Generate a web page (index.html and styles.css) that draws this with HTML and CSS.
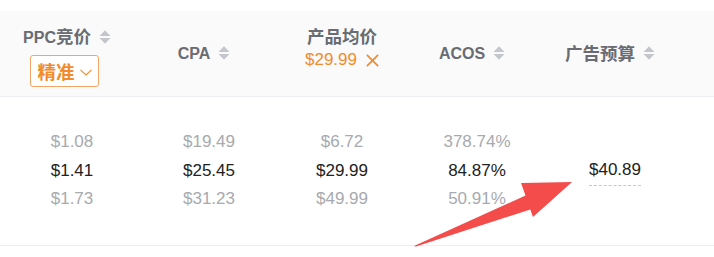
FILE: index.html
```html
<!DOCTYPE html>
<html lang="zh-CN">
<head>
<meta charset="utf-8">
<title>广告数据</title>
<link rel="stylesheet" href="styles.css">
</head>
<body>
<div class="table">
  <div class="row head">
    <div class="cell sortable stacked">
      <div class="title"><span>PPC<span class="cjk">竞价</span></span><svg class="sort" viewBox="0 0 12 14" width="12" height="14"><path d="M0.5 6 L6 0.3 L11.5 6 Z M0.5 8 L6 13.7 L11.5 8 Z"/></svg></div>
      <button class="pick">精准<svg class="chev" viewBox="0 0 12 7" width="12" height="7"><path d="M0.5 0.8 L6 6 L11.5 0.8"/></svg></button>
    </div>
    <div class="cell sortable">
      <div class="title">CPA<svg class="sort" viewBox="0 0 12 14" width="12" height="14"><path d="M0.5 6 L6 0.3 L11.5 6 Z M0.5 8 L6 13.7 L11.5 8 Z"/></svg></div>
    </div>
    <div class="cell stacked">
      <div class="title cjk">产品均价</div>
      <div class="filter">$29.99<svg class="close" viewBox="0 0 12 12" width="13" height="13"><path d="M0.8 0.8 L11.2 11.2 M11.2 0.8 L0.8 11.2"/></svg></div>
    </div>
    <div class="cell sortable">
      <div class="title">ACOS<svg class="sort" viewBox="0 0 12 14" width="12" height="14"><path d="M0.5 6 L6 0.3 L11.5 6 Z M0.5 8 L6 13.7 L11.5 8 Z"/></svg></div>
    </div>
    <div class="cell sortable">
      <div class="title"><span class="cjk">广告预算</span><svg class="sort" viewBox="0 0 12 14" width="12" height="14"><path d="M0.5 6 L6 0.3 L11.5 6 Z M0.5 8 L6 13.7 L11.5 8 Z"/></svg></div>
    </div>
  </div>
  <div class="row body">
    <div class="cell values"><span class="muted">$1.08</span><span>$1.41</span><span class="muted">$1.73</span></div>
    <div class="cell values"><span class="muted">$19.49</span><span>$25.45</span><span class="muted">$31.23</span></div>
    <div class="cell values"><span class="muted">$6.72</span><span>$29.99</span><span class="muted">$49.99</span></div>
    <div class="cell values"><span class="muted">378.74%</span><span>84.87%</span><span class="muted">50.91%</span></div>
    <div class="cell values"><span class="budget">$40.89</span></div>
  </div>
</div>
<svg class="arrow" width="714" height="257" viewBox="0 0 714 257">
  <polygon points="414,246 525.5,195.6 521,183 572,182 533,217 530.3,209.4 416,246.5"/>
</svg>
</body>
</html>
```

FILE: styles.css
```css
html, body {
  margin: 0;
  padding: 0;
  background: #ffffff;
}
body {
  font-family: "Liberation Sans", "Noto Sans CJK SC", sans-serif;
  position: relative;
  width: 714px;
  height: 257px;
  overflow: hidden;
}
.table {
  margin-top: 11px;
}
.row {
  display: grid;
  grid-template-columns: 144px 130px 136px 134px 142px 28px;
  border-bottom: 1px solid #ebeef5;
}
.head {
  height: 85px;
  background: #fafafa;
}
.body {
  height: 148px;
}
.cell {
  display: flex;
  flex-direction: column;
  align-items: center;
  justify-content: center;
}
.head .cell.sortable {
  padding-right: 10px;
}
.head .cell.stacked {
  justify-content: flex-start;
  padding-top: 16px;
}
.title {
  display: flex;
  align-items: center;
  gap: 8px;
  font-size: 16px;
  line-height: 20px;
  font-weight: bold;
  color: #696c72;
}
.cjk {
  font-size: 17.5px;
}
.sort {
  fill: #c3c6cc;
  margin-top: -1px;
}
.pick {
  margin-top: 7px;
  margin-right: 5px;
  width: 69px;
  height: 32px;
  box-sizing: border-box;
  display: flex;
  align-items: center;
  justify-content: center;
  gap: 5px;
  padding: 0;
  background: #ffffff;
  border: 1px solid #f2a565;
  border-radius: 3px;
  font-family: "Liberation Sans", "Noto Sans CJK SC", sans-serif;
  font-size: 18.5px;
  font-weight: bold;
  color: #f28b2c;
}
.chev {
  fill: none;
  stroke: #f28b2c;
  stroke-width: 1.1;
  margin-top: 2px;
}
.filter {
  margin-top: 3px;
  display: flex;
  align-items: center;
  gap: 9px;
  font-size: 17px;
  line-height: 20px;
  color: #f28b2c;
}
.close {
  fill: none;
  stroke: #f28b2c;
  stroke-width: 1.6;
}
.values {
  font-size: 17px;
  line-height: 28.5px;
  color: #222222;
}
.muted {
  color: #a7aaaf;
}
.budget {
  display: inline-block;
  line-height: 22px;
  padding-bottom: 4px;
  margin-top: 2px;
  border-bottom: 1px dashed #c6c8cc;
}
.arrow {
  position: absolute;
  left: 0;
  top: 0;
  pointer-events: none;
}
.arrow polygon {
  fill: #f44b4b;
}
```
